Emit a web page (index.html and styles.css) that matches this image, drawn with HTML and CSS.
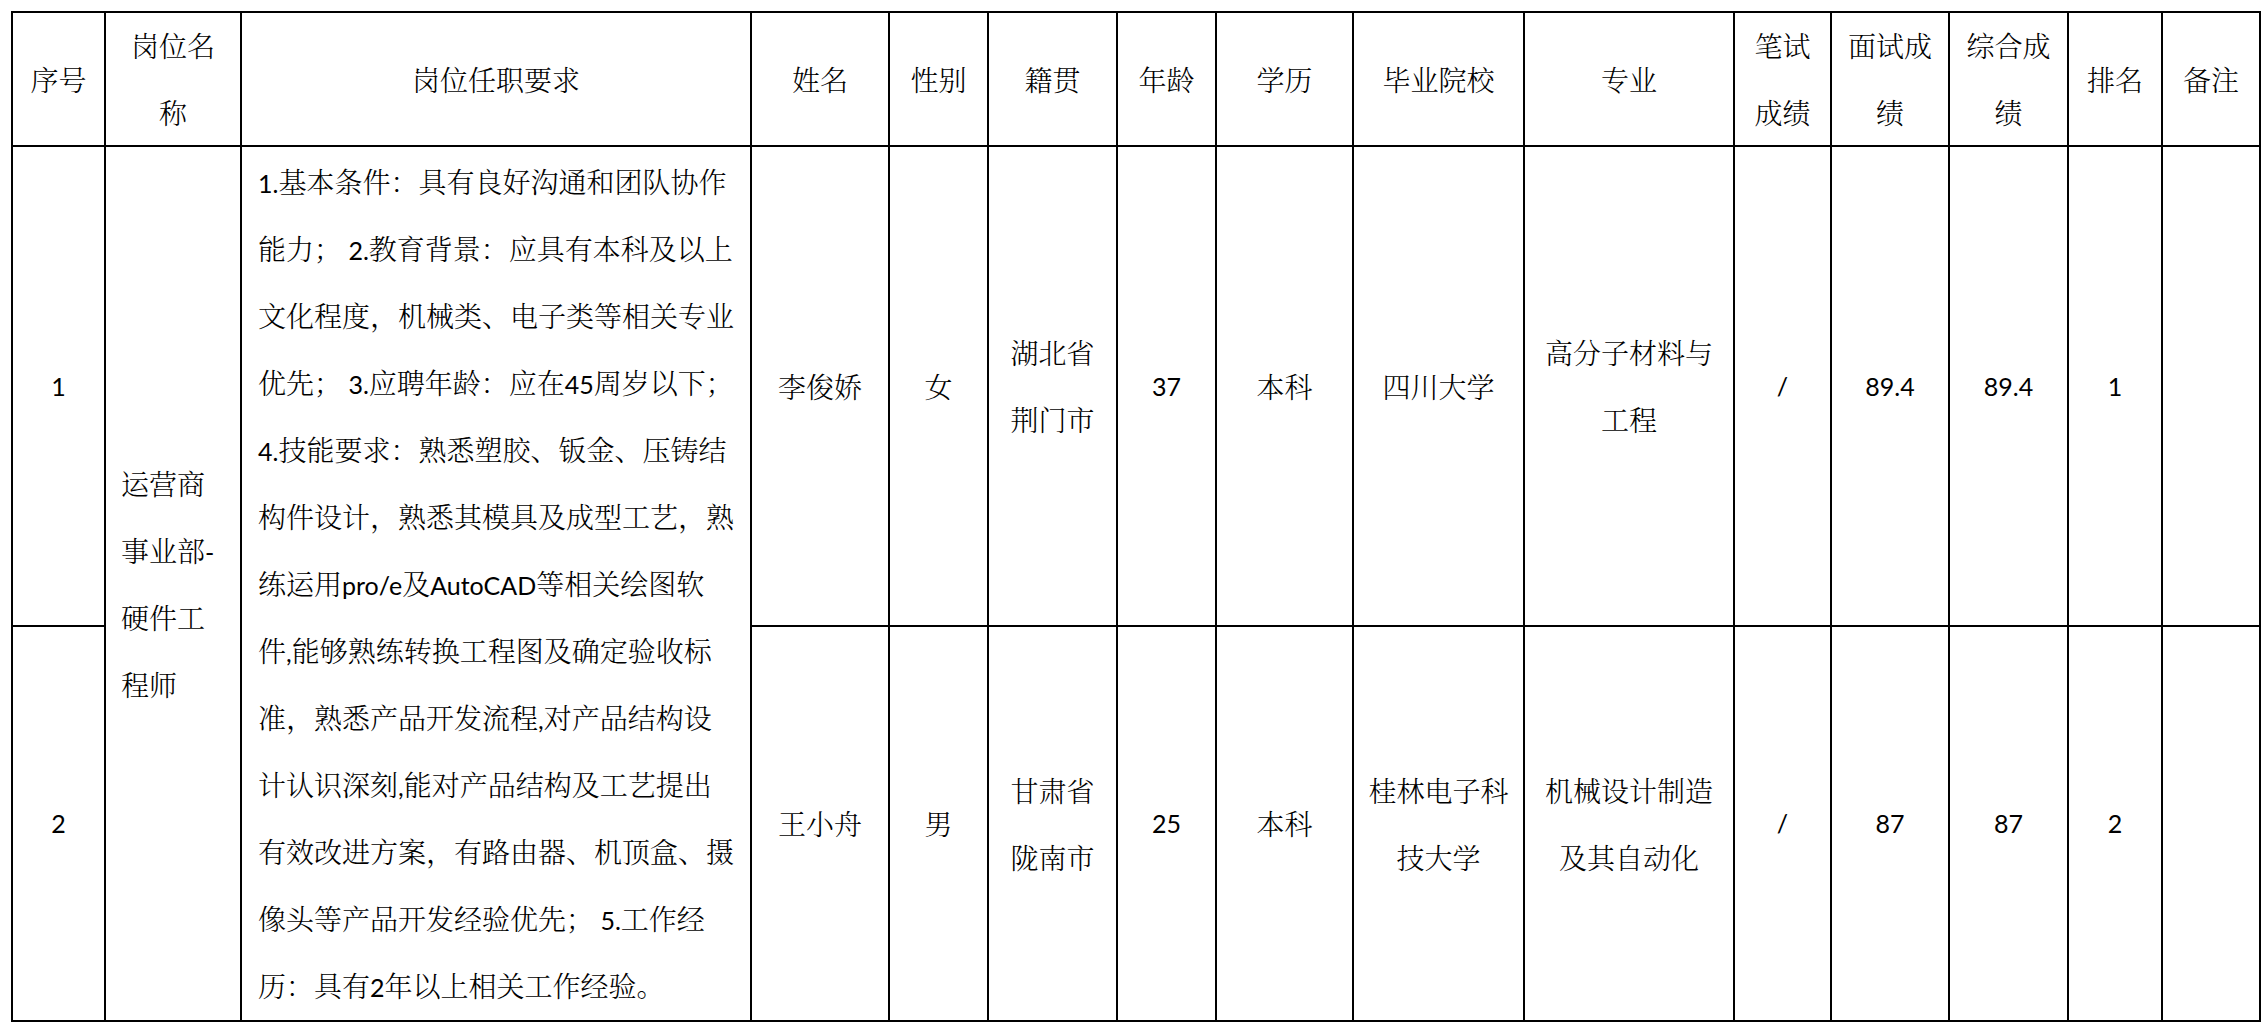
FILE: index.html
```html
<!DOCTYPE html>
<html lang="zh-CN">
<head>
<meta charset="utf-8">
<title>岗位人员名单</title>
<link rel="stylesheet" href="styles.css">
</head>
<body>
<div class="sheet">
  <div class="cell">序号</div>
  <div class="cell">岗位名<br>称</div>
  <div class="cell">岗位任职要求</div>
  <div class="cell">姓名</div>
  <div class="cell">性别</div>
  <div class="cell">籍贯</div>
  <div class="cell">年龄</div>
  <div class="cell">学历</div>
  <div class="cell">毕业院校</div>
  <div class="cell">专业</div>
  <div class="cell">笔试<br>成绩</div>
  <div class="cell">面试成<br>绩</div>
  <div class="cell">综合成<br>绩</div>
  <div class="cell">排名</div>
  <div class="cell">备注</div>

  <div class="cell"><span class="lat">1</span></div>
  <div class="cell post span2"><div class="block">运营商<br>事业部<span class="lat">-</span><br>硬件工<br>程师</div></div>
  <div class="cell req span2">
    <div class="block"><span class="lat">1.</span>基本条件：具有良好沟通和团队协作<br>能力；<span class="lat"> 2.</span>教育背景：应具有本科及以上<br>文化程度，机械类、电子类等相关专业<br>优先；<span class="lat"> 3.</span>应聘年龄：应在<span class="lat">45</span>周岁以下；<br><span class="lat">4.</span>技能要求：熟悉塑胶、钣金、压铸结<br>构件设计，熟悉其模具及成型工艺，熟<br>练运用<span class="lat">pro/e</span>及<span class="lat">AutoCAD</span>等相关绘图软<br>件<span class="lat">,</span>能够熟练转换工程图及确定验收标<br>准，熟悉产品开发流程<span class="lat">,</span>对产品结构设<br>计认识深刻<span class="lat">,</span>能对产品结构及工艺提出<br>有效改进方案，有路由器、机顶盒、摄<br>像头等产品开发经验优先；<span class="lat"> 5.</span>工作经<br>历：具有<span class="lat">2</span>年以上相关工作经验。</div>
  </div>
  <div class="cell">李俊娇</div>
  <div class="cell">女</div>
  <div class="cell">湖北省<br>荆门市</div>
  <div class="cell"><span class="lat">37</span></div>
  <div class="cell">本科</div>
  <div class="cell">四川大学</div>
  <div class="cell">高分子材料与<br>工程</div>
  <div class="cell"><span class="lat">/</span></div>
  <div class="cell"><span class="lat">89.4</span></div>
  <div class="cell"><span class="lat">89.4</span></div>
  <div class="cell"><span class="lat">1</span></div>
  <div class="cell"></div>

  <div class="cell"><span class="lat">2</span></div>
  <div class="cell">王小舟</div>
  <div class="cell">男</div>
  <div class="cell">甘肃省<br>陇南市</div>
  <div class="cell"><span class="lat">25</span></div>
  <div class="cell">本科</div>
  <div class="cell">桂林电子科<br>技大学</div>
  <div class="cell">机械设计制造<br>及其自动化</div>
  <div class="cell"><span class="lat">/</span></div>
  <div class="cell"><span class="lat">87</span></div>
  <div class="cell"><span class="lat">87</span></div>
  <div class="cell"><span class="lat">2</span></div>
  <div class="cell"></div>
</div>
</body>
</html>
```

FILE: styles.css
```css
html, body {
  margin: 0;
  background: #ffffff;
}

body {
  padding: 11px;
  font-family: "Noto Serif CJK SC", "Noto Sans CJK SC", serif;
  font-size: 28px;
  font-weight: 300;
  color: #000000;
}

.sheet {
  display: grid;
  grid-template-columns: 91px 134px 508px 136px 97px 127px 97px 135px 169px 208px 95px 116px 117px 92px 96px;
  grid-template-rows: 132px 478px 393px;
  gap: 2px;
  padding: 2px;
  background: #000000;
  width: max-content;
}

.cell {
  background: #ffffff;
  display: flex;
  align-items: center;
  justify-content: center;
  text-align: center;
  line-height: 67px;
  white-space: nowrap;
}

.span2 {
  grid-row: span 2;
}

.post {
  justify-content: flex-start;
  text-align: left;
  padding-left: 15px;
}

.req {
  justify-content: flex-start;
  text-align: left;
  padding-left: 16px;
}

.block {
  line-height: 67px;
}

.lat {
  font-family: Lato, "Liberation Sans", sans-serif;
  font-size: 25px;
  font-weight: 400;
  line-height: 1;
}
```
